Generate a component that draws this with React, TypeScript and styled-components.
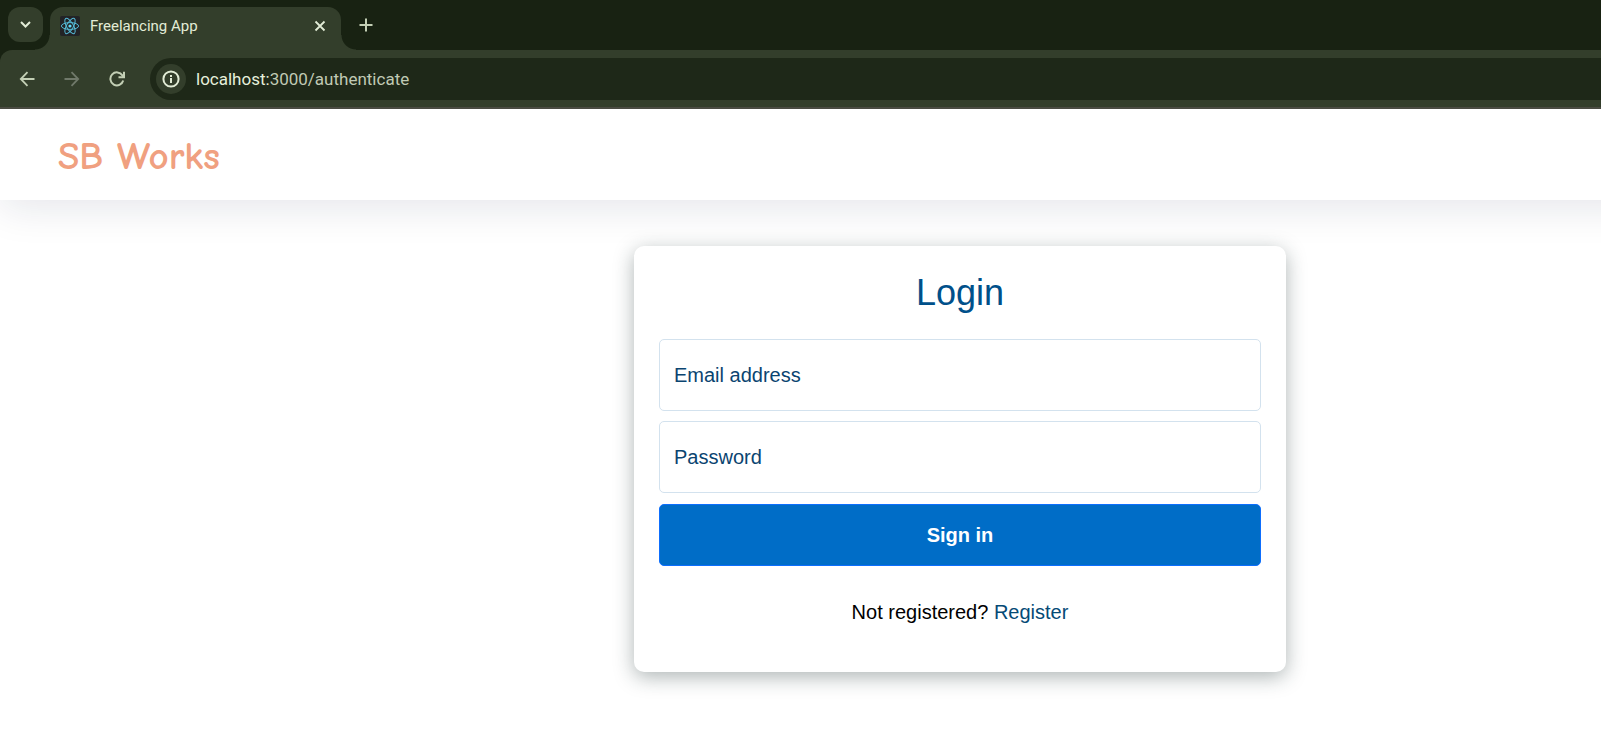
import React from "react";
import styled, { createGlobalStyle } from "styled-components";

const colors = {
  strip: "#182212",
  toolbar: "#333e2b",
  omnibox: "#1e2818",
  icon: "#c3cfb5",
  iconDim: "#70796a",
  heading: "#00508a",
  link: "#054a76",
  fieldBorder: "#d3e2ee",
  primary: "#006dc7",
};

const chromeFont = `Roboto, "Open Sans", sans-serif`;

const GlobalStyle = createGlobalStyle`
  *, *::before, *::after { box-sizing: border-box; }
  body {
    margin: 0;
    background: #fff;
    font-family: "Liberation Sans", Arial, Helvetica, sans-serif;
    font-size: 20px;
    line-height: 30px;
    color: #000;
  }
  button, input { font: inherit; }
`;

const Page = styled.div`
  min-height: 100vh;
  overflow: hidden;
`;

const TabStrip = styled.div`
  display: flex;
  align-items: flex-end;
  height: 50px;
  padding-left: 8px;
  background: ${colors.strip};
`;

const IconButton = styled.button<{ $size: number; $dim?: boolean }>`
  display: flex;
  align-items: center;
  justify-content: center;
  flex: none;
  width: ${(p) => p.$size}px;
  height: ${(p) => p.$size}px;
  padding: 0;
  border: 0;
  border-radius: 50%;
  background: none;
  color: ${(p) => (p.$dim ? colors.iconDim : colors.icon)};
`;

const TabSearch = styled(IconButton)`
  margin: 0 7px 8px 0;
  border-radius: 12px;
  background: ${colors.toolbar};
  color: #e2ecd6;
`;

const Tab = styled.div`
  position: relative;
  display: flex;
  align-items: center;
  width: 291px;
  height: 43px;
  padding: 0 8px 6px 10px;
  border-radius: 13px 13px 0 0;
  background: ${colors.toolbar};
  color: #e2ecd6;

  &::before,
  &::after {
    content: "";
    position: absolute;
    bottom: 0;
    width: 15px;
    height: 15px;
  }
  &::before {
    right: 100%;
    background: radial-gradient(circle at 0 0, transparent 14px, ${colors.toolbar} 15px);
  }
  &::after {
    left: 100%;
    background: radial-gradient(circle at 100% 0, transparent 14px, ${colors.toolbar} 15px);
  }
`;

const TabTitle = styled.span`
  flex: 1;
  margin-left: 10px;
  font-family: ${chromeFont};
  font-size: 15px;
  line-height: 20px;
`;

const NewTab = styled(IconButton)`
  margin: 0 0 10px 10px;
`;

const TabClose = styled(IconButton)`
  color: #e2ecd6;
`;

const ToolbarBack = styled.div`
  background: ${colors.strip};
`;

const Toolbar = styled.div`
  display: flex;
  align-items: center;
  gap: 15px;
  height: 59px;
  padding: 0 0 0 12px;
  border-bottom: 2px solid #4a4b42;
  border-top-left-radius: 12px;
  background: ${colors.toolbar};
`;

const Omnibox = styled.div`
  display: flex;
  align-items: center;
  flex: 1;
  gap: 10px;
  height: 42px;
  margin-left: 3px;
  padding-left: 6px;
  border-radius: 21px 0 0 21px;
  background: ${colors.omnibox};
`;

const SiteInfo = styled(IconButton)`
  background: ${colors.toolbar};
  color: #e2ecd6;
`;

const Address = styled.span`
  font-family: ${chromeFont};
  font-size: 17px;
  line-height: 24px;
  color: #c0cab4;
`;

const Host = styled.span`
  color: #e6efdb;
`;

const SiteHeader = styled.header`
  display: flex;
  align-items: center;
  height: 91px;
  margin-right: -60px;
  padding-left: 58px;
  background: #fff;
  box-shadow: 0 8px 40px rgba(20, 30, 60, 0.11);
  clip-path: inset(0 0 -60px 0);
`;

const Brand = styled.h3`
  margin: 0;
  padding-top: 4px;
  font-family: "Comic Sans MS", "Comic Neue", "Noto Sans", sans-serif;
  font-size: 39px;
  font-weight: 700;
  line-height: 44px;
  color: #f0a080;
`;

/* The form sits right of the window's centre, as the page runs past the right edge. */
const Main = styled.main`
  display: flex;
  justify-content: center;
  padding: 46px 0 57px 319px;
`;

const Card = styled.form`
  width: 652px;
  padding: 25px;
  border-radius: 10px;
  background: #fff;
  box-shadow: 0 5px 20px rgba(30, 50, 50, 0.36);
`;

const Title = styled.h2`
  margin: 0 0 24px;
  font-size: 36px;
  font-weight: 400;
  line-height: 44px;
  text-align: center;
  color: ${colors.heading};
`;

const Fields = styled.div`
  display: grid;
  gap: 10px;
`;

const Field = styled.div`
  display: grid;
  align-items: center;
`;

const FieldLabel = styled.label`
  grid-area: 1 / 1;
  z-index: 1;
  padding-left: 15px;
  color: #0a4470;
  pointer-events: none;
`;

const FieldInput = styled.input`
  grid-area: 1 / 1;
  width: 100%;
  height: 72px;
  padding: 0 15px;
  border: 1px solid ${colors.fieldBorder};
  border-radius: 5px;
  outline: 0;
  background: #fff;

  &:focus { border-color: ${colors.primary}; }
`;

const SubmitButton = styled.button`
  display: block;
  width: 100%;
  height: 62px;
  margin-top: 11px;
  border: 1px solid #0d6efd;
  border-radius: 5px;
  background: ${colors.primary};
  font-weight: 700;
  color: #fff;
`;

const Note = styled.p`
  margin: 31px 0 20px;
  text-align: center;
`;

const RegisterLink = styled.a`
  color: ${colors.link};
  text-decoration: none;
`;

type GlyphProps = { size: number; width?: number; children: React.ReactNode };

const Glyph = ({ size, width = 2, children }: GlyphProps) => (
  <svg
    width={size}
    height={size}
    viewBox={`0 0 ${size} ${size}`}
    fill="none"
    stroke="currentColor"
    strokeWidth={width}
    aria-hidden="true"
  >
    {children}
  </svg>
);

const ReactLogo = () => (
  <svg width="20" height="20" viewBox="0 0 20 20" fill="none" aria-hidden="true">
    <rect width="20" height="20" rx="2" fill="#222326" />
    <g stroke="#55b9d6" strokeWidth="1">
      <ellipse cx="10" cy="10" rx="8.6" ry="3.4" />
      <ellipse cx="10" cy="10" rx="8.6" ry="3.4" transform="rotate(60 10 10)" />
      <ellipse cx="10" cy="10" rx="8.6" ry="3.4" transform="rotate(120 10 10)" />
    </g>
    <circle cx="10" cy="10" r="1.6" fill="#61dafb" />
  </svg>
);

const fields = [
  { id: "email", label: "Email address", type: "email" },
  { id: "password", label: "Password", type: "password" },
];

export default function App() {
  return (
    <Page>
      <GlobalStyle />
      <TabStrip>
        <TabSearch type="button" $size={35} aria-label="Search tabs">
          <Glyph size={13}>
            <path d="M2 4l4.500 4.500L11 4" />
          </Glyph>
        </TabSearch>
        <Tab>
          <ReactLogo />
          <TabTitle>Freelancing App</TabTitle>
          <TabClose type="button" $size={26} aria-label="Close tab">
            <Glyph size={12} width={1.8}>
              <path d="M1.500 1.500l9 9M10.500 1.500l-9 9" />
            </Glyph>
          </TabClose>
        </Tab>
        <NewTab type="button" $size={30} aria-label="New tab">
          <Glyph size={14}>
            <path d="M7 .5v13M.5 7h13" />
          </Glyph>
        </NewTab>
      </TabStrip>
      <ToolbarBack>
        <Toolbar>
          <IconButton type="button" $size={30} aria-label="Back">
            <Glyph size={16} width={1.8}>
              <path d="M15.500 8H2M8.500 1.200 1.800 8l6.700 6.800" />
            </Glyph>
          </IconButton>
          <IconButton type="button" $size={30} $dim aria-label="Forward">
            <Glyph size={16} width={1.8}>
              <path d="M.5 8H14M7.500 1.200 14.200 8l-6.700 6.800" />
            </Glyph>
          </IconButton>
          <IconButton type="button" $size={30} aria-label="Reload">
            <Glyph size={16}>
              <path d="M14.200 9.500A6.500 6.500 0 1 1 13.400 4.400L14.500 6" />
              <path d="M15 .8v5.500H9.500" />
            </Glyph>
          </IconButton>
          <Omnibox>
            <SiteInfo type="button" $size={30} aria-label="View site information">
              <Glyph size={18}>
                <circle cx="9" cy="9" r="7.600" />
                <path d="M9 8v5M9 5v2" />
              </Glyph>
            </SiteInfo>
            <Address>
              <Host>localhost:</Host>3000/authenticate
            </Address>
          </Omnibox>
        </Toolbar>
      </ToolbarBack>
      <SiteHeader>
        <Brand>SB Works</Brand>
      </SiteHeader>
      <Main>
        <Card onSubmit={(e) => e.preventDefault()}>
          <Title>Login</Title>
          <Fields>
            {fields.map((f) => (
              <Field key={f.id}>
                <FieldLabel htmlFor={f.id}>{f.label}</FieldLabel>
                <FieldInput id={f.id} type={f.type} />
              </Field>
            ))}
          </Fields>
          <SubmitButton type="submit">Sign in</SubmitButton>
          <Note>
            Not registered? <RegisterLink href="#register">Register</RegisterLink>
          </Note>
        </Card>
      </Main>
    </Page>
  );
}
